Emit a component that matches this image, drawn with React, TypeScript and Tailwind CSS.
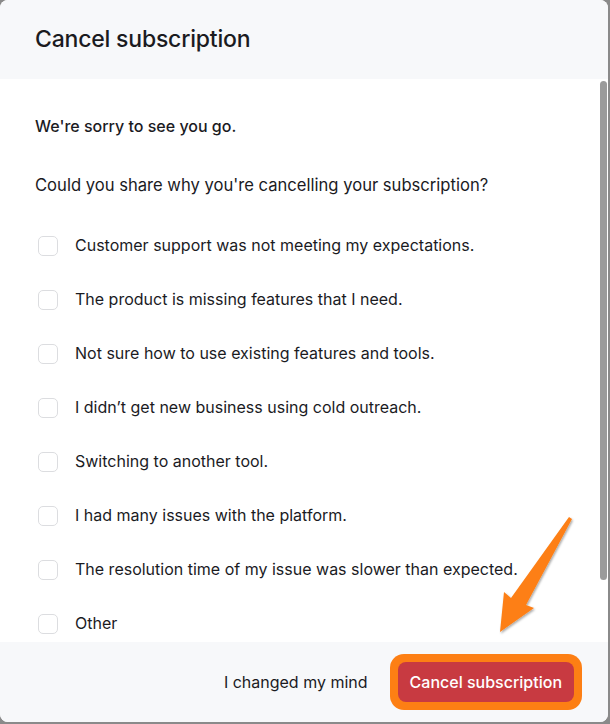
import React from 'react';

const reasons = [
  'Customer support was not meeting my expectations.',
  'The product is missing features that I need.',
  'Not sure how to use existing features and tools.',
  'I didn’t get new business using cold outreach.',
  'Switching to another tool.',
  'I had many issues with the platform.',
  'The resolution time of my issue was slower than expected.',
  'Other',
];

export default function App() {
  return (
    <div className="w-[610px] h-[724px] bg-[#8a8a8a] overflow-hidden" style={{ fontFamily: 'Inter, "Noto Sans", sans-serif' }}>
      <div className="relative w-[608px] h-[722px] bg-white rounded-lg overflow-hidden flex flex-col text-[#1b1b1f]">
        {/* Header */}
        <div className="h-[79px] shrink-0 bg-[#f7f8fa] flex items-center px-[35px]">
          <h2 className="text-[23px] font-medium tracking-[-0.2px]">Cancel subscription</h2>
        </div>

        {/* Body */}
        <div className="flex-1 px-[35px] pt-[36px]">
          <p className="text-[16px] font-medium leading-[22px]">We're sorry to see you go.</p>
          <p className="text-[16.6px] leading-[22px] mt-[37px]">Could you share why you're cancelling your subscription?</p>
          <div className="mt-[39px] flex flex-col gap-[33px]">
            {reasons.map((r) => (
              <label key={r} className="flex items-center gap-[17px] h-[21px] pl-[3px]">
                <span className="w-[20px] h-[20px] rounded-[5px] border border-[#dcdde0] bg-white shrink-0" />
                <span className="text-[16px] leading-[21px]">{r}</span>
              </label>
            ))}
          </div>
        </div>

        {/* Footer */}
        <div className="h-[80px] shrink-0 bg-[#f7f8fa] flex items-center justify-end pr-[26px] gap-[22px]">
          <button className="text-[16px] text-[#1b1b1f]">I changed my mind</button>
          <div className="rounded-[14px] bg-[#fd7f14] p-[8px]">
            <button className="h-[40px] px-[12px] rounded-[8px] bg-[#c83a41] text-white text-[16px] font-medium">
              Cancel subscription
            </button>
          </div>
        </div>

        {/* scrollbar */}
        <div className="absolute right-[1px] top-[81px] w-[7px] h-[499px] rounded-full bg-[#9b9b9b]" />

        {/* arrow annotation */}
        <svg className="absolute left-[490px] top-[510px]" width="90" height="130" viewBox="0 0 90 130">
          <defs>
            <filter id="sh" x="-30%" y="-30%" width="160%" height="160%">
              <feDropShadow dx="1" dy="1.5" stdDeviation="1.2" floodColor="#000" floodOpacity="0.35" />
            </filter>
          </defs>
          <path
            d="M79 7 L82 9 L36 95 L44 98 L10 122 L14 82 L21 88 Z"
            fill="#fd7f14"
            filter="url(#sh)"
          />
        </svg>
      </div>
    </div>
  );
}
